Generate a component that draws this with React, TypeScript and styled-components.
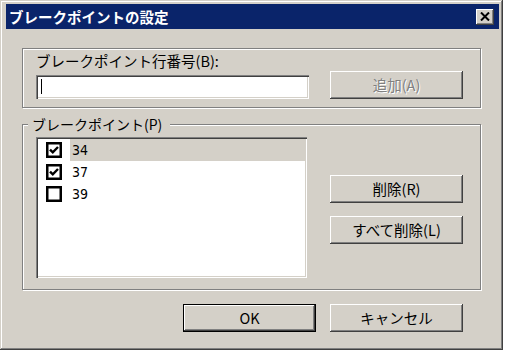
import styled, { createGlobalStyle } from "styled-components";

const GlobalStyle = createGlobalStyle`
  html, body {
    margin: 0;
    padding: 0;
    background: #ffffff;
  }
  body {
    font-family: "Noto Sans CJK JP", "Liberation Sans", sans-serif;
  }
`;

const Window = styled.div`
  box-sizing: border-box;
  width: 503px;
  height: 350px;
  padding: 4px;
  background: #d4d0c8;
  display: flex;
  flex-direction: column;
  box-shadow: inset -1px -1px 0 #404040, inset 1px 1px 0 #d4d0c8,
    inset -2px -2px 0 #808080, inset 2px 2px 0 #ffffff;
`;

const TitleBar = styled.div`
  height: 25px;
  margin-left: 2px;
  padding: 0 5px 0 3px;
  background: #0a246a;
  display: flex;
  align-items: center;
  justify-content: space-between;
`;

const Title = styled.div`
  color: #ffffff;
  font-weight: bold;
  font-size: 14.5px;
  line-height: 18px;
`;

const CloseButton = styled.div`
  box-sizing: border-box;
  width: 18px;
  height: 16px;
  background: #d4d0c8;
  display: flex;
  align-items: center;
  justify-content: center;
  box-shadow: inset -1px -1px 0 #404040, inset 1px 1px 0 #ffffff,
    inset -2px -2px 0 #808080;
`;

const Content = styled.div`
  padding: 19px 18px 0 18px;
  display: flex;
  flex-direction: column;
`;

const EtchedBox = styled.div`
  box-sizing: border-box;
  height: 60px;
  border: 1px solid #808080;
  box-shadow: 1px 1px 0 #ffffff, inset 1px 1px 0 #ffffff;
  padding: 3px 17px 0 13px;
  display: flex;
  flex-direction: column;
`;

const Label = styled.div`
  font-size: 14.5px;
  line-height: 18px;
  color: #000000;
`;

const InputRow = styled.div`
  margin-top: 1px;
  display: flex;
  align-items: flex-end;
  gap: 21px;
`;

const TextField = styled.div`
  box-sizing: border-box;
  width: 273px;
  height: 24px;
  background: #ffffff;
  padding: 4px 0 0 5px;
  box-shadow: inset 1px 1px 0 #808080, inset 2px 2px 0 #404040,
    inset -1px -1px 0 #ffffff, inset -2px -2px 0 #d4d0c8;
`;

const Caret = styled.div`
  width: 1px;
  height: 15px;
  background: #000000;
`;

const Button = styled.div<{ $default?: boolean; $disabled?: boolean }>`
  box-sizing: border-box;
  width: 133px;
  height: 28px;
  background: #d4d0c8;
  display: flex;
  align-items: center;
  justify-content: center;
  font-size: 14.5px;
  line-height: 18px;
  color: ${(p) => (p.$disabled ? "#808080" : "#000000")};
  text-shadow: ${(p) => (p.$disabled ? "1px 1px 0 #ffffff" : "none")};
  box-shadow: ${(p) =>
    p.$default
      ? "inset 0 0 0 1px #000000, inset -2px -2px 0 #404040, inset 2px 2px 0 #ffffff, inset -3px -3px 0 #808080"
      : "inset -1px -1px 0 #404040, inset 1px 1px 0 #ffffff, inset -2px -2px 0 #808080"};
`;

const Group = styled.fieldset`
  margin: 6px 0 0 0;
  padding: 3px 17px 11px 13px;
  border: 1px solid #808080;
  box-shadow: 1px 1px 0 #ffffff, inset 1px 1px 0 #ffffff;
  display: flex;
  gap: 23px;
`;

const Legend = styled.legend`
  margin-left: -8px;
  padding: 0 8px 0 4px;
  background: #d4d0c8;
  font-size: 14px;
  line-height: 20px;
  color: #000000;
`;

const ListBox = styled.div`
  box-sizing: border-box;
  width: 271px;
  height: 141px;
  background: #ffffff;
  padding: 2px 2px 0 2px;
  box-shadow: inset 1px 1px 0 #808080, inset 2px 2px 0 #404040,
    inset -1px -1px 0 #ffffff, inset -2px -2px 0 #d4d0c8;
  display: flex;
  flex-direction: column;
`;

const Row = styled.div`
  height: 22px;
  display: flex;
  align-items: center;
`;

const CheckCell = styled.div`
  width: 32px;
  height: 22px;
  display: flex;
  align-items: center;
  padding-left: 8px;
  box-sizing: border-box;
`;

const ItemText = styled.div<{ $selected?: boolean }>`
  flex: 1;
  height: 22px;
  display: flex;
  align-items: center;
  padding-left: 2px;
  background: ${(p) => (p.$selected ? "#d4d0c8" : "transparent")};
  font-family: "Liberation Sans Narrow", "DejaVu Sans Condensed", "Liberation Sans", sans-serif;
  font-size: 14px;
  color: #000000;
`;

const SideButtons = styled.div`
  margin-top: 38px;
  display: flex;
  flex-direction: column;
  gap: 13px;
`;

const Footer = styled.div`
  margin-top: 14px;
  padding-right: 18px;
  display: flex;
  justify-content: flex-end;
  gap: 14px;
`;

const CheckBox = ({ checked }: { checked: boolean }) => (
  <svg width="16" height="16" viewBox="0 0 16 16">
    <rect x="1.25" y="1.25" width="13.5" height="13.5" fill="#fff" stroke="#000" strokeWidth="2.5" />
    {checked && (
      <path d="M4 7.6 L6.8 10.4 L12 5" fill="none" stroke="#000" strokeWidth="2.4" />
    )}
  </svg>
);

const items = [
  { line: 34, checked: true, selected: true },
  { line: 37, checked: true, selected: false },
  { line: 39, checked: false, selected: false },
];

export default function App() {
  return (
    <>
      <GlobalStyle />
      <Window>
        <TitleBar>
          <Title>ブレークポイントの設定</Title>
          <CloseButton>
            <svg width="10" height="9" viewBox="0 0 10 9">
              <path d="M1 0.5 L9 8.5 M9 0.5 L1 8.5" stroke="#000" strokeWidth="2" />
            </svg>
          </CloseButton>
        </TitleBar>
        <Content>
          <EtchedBox>
            <Label>ブレークポイント行番号(B):</Label>
            <InputRow>
              <TextField>
                <Caret />
              </TextField>
              <Button $disabled>追加(A)</Button>
            </InputRow>
          </EtchedBox>
          <Group>
            <Legend>ブレークポイント(P)</Legend>
            <ListBox>
              {items.map((it) => (
                <Row key={it.line}>
                  <CheckCell>
                    <CheckBox checked={it.checked} />
                  </CheckCell>
                  <ItemText $selected={it.selected}>{it.line}</ItemText>
                </Row>
              ))}
            </ListBox>
            <SideButtons>
              <Button>削除(R)</Button>
              <Button>すべて削除(L)</Button>
            </SideButtons>
          </Group>
          <Footer>
            <Button $default>OK</Button>
            <Button>キャンセル</Button>
          </Footer>
        </Content>
      </Window>
    </>
  );
}
